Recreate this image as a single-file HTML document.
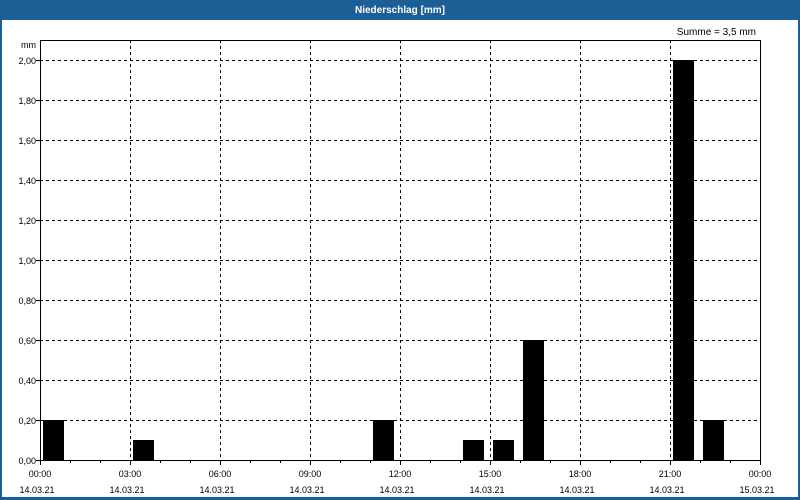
<!DOCTYPE html>
<html><head><style>
body{margin:0;width:800px;height:500px;overflow:hidden;background:#fff;font-family:"Liberation Sans",sans-serif}
</style></head><body>
<svg width="800" height="500" xmlns="http://www.w3.org/2000/svg" style="display:block">
<rect x="0" y="0" width="800" height="500" fill="#1c5f96"/>
<rect x="2" y="20" width="796" height="477" fill="#fff"/>
<text x="400" y="13" fill="#fff" font-size="10" font-weight="bold" text-anchor="middle" font-family="Liberation Sans">Niederschlag [mm]</text>
<text x="756" y="35" font-size="10" text-anchor="end" fill="#000">Summe = 3,5 mm</text>
<text x="36" y="48" font-size="9" text-anchor="end">mm</text>
<g stroke="#000" stroke-width="1" stroke-dasharray="3,3" shape-rendering="crispEdges">
<path d="M40 60.5H760M40 100.5H760M40 140.5H760M40 180.5H760M40 220.5H760M40 260.5H760M40 300.5H760M40 340.5H760M40 380.5H760M40 420.5H760"/>
<path d="M130.5 40V460M220.5 40V460M310.5 40V460M400.5 40V460M490.5 40V460M580.5 40V460M670.5 40V460"/>
</g>
<g fill="#000">
<rect x="43" y="420" width="21" height="40"/>
<rect x="133" y="440" width="21" height="20"/>
<rect x="373" y="420" width="21" height="40"/>
<rect x="463" y="440" width="21" height="20"/>
<rect x="493" y="440" width="21" height="20"/>
<rect x="523" y="340" width="21" height="120"/>
<rect x="673" y="60" width="21" height="400"/>
<rect x="703" y="420" width="21" height="40"/>
</g>
<rect x="40.5" y="40.5" width="720" height="420" fill="none" stroke="#000" shape-rendering="crispEdges"/>
<g stroke="#000" shape-rendering="crispEdges">
<path d="M40.5 460V465M70.5 460V463M100.5 460V463M130.5 460V465M160.5 460V463M190.5 460V463M220.5 460V465M250.5 460V463M280.5 460V463M310.5 460V465M340.5 460V463M370.5 460V463M400.5 460V465M430.5 460V463M460.5 460V463M490.5 460V465M520.5 460V463M550.5 460V463M580.5 460V465M610.5 460V463M640.5 460V463M670.5 460V465M700.5 460V463M730.5 460V463M760.5 460V465"/>
<path d="M36 60.5H40M36 100.5H40M36 140.5H40M36 180.5H40M36 220.5H40M36 260.5H40M36 300.5H40M36 340.5H40M36 380.5H40M36 420.5H40M36 460.5H40"/>
</g>
<g font-size="9" text-anchor="end" fill="#000">
<text x="36" y="64">2,00</text><text x="36" y="104">1,80</text><text x="36" y="144">1,60</text><text x="36" y="184">1,40</text><text x="36" y="224">1,20</text><text x="36" y="264">1,00</text><text x="36" y="304">0,80</text><text x="36" y="344">0,60</text><text x="36" y="384">0,40</text><text x="36" y="424">0,20</text><text x="36" y="464">0,00</text>
</g>
<g font-size="9" text-anchor="middle" fill="#000">
<text x="40" y="477">00:00</text><text x="130" y="477">03:00</text><text x="220" y="477">06:00</text><text x="310" y="477">09:00</text><text x="400" y="477">12:00</text><text x="490" y="477">15:00</text><text x="580" y="477">18:00</text><text x="670" y="477">21:00</text><text x="760" y="477">00:00</text>
<text x="37" y="493">14.03.21</text><text x="127" y="493">14.03.21</text><text x="217" y="493">14.03.21</text><text x="307" y="493">14.03.21</text><text x="397" y="493">14.03.21</text><text x="487" y="493">14.03.21</text><text x="577" y="493">14.03.21</text><text x="667" y="493">14.03.21</text><text x="757" y="493">15.03.21</text>
</g>
</svg>
</body></html>
